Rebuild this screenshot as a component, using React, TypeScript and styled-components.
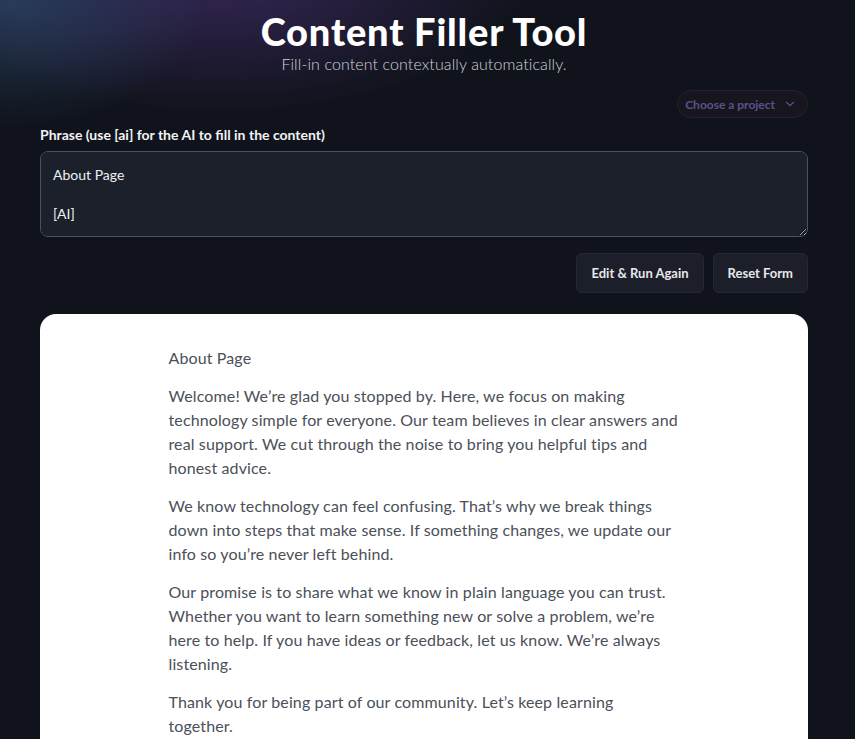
import React from 'react'
import styled, { createGlobalStyle } from 'styled-components'

const GlobalStyle = createGlobalStyle`
  html, body { margin: 0; padding: 0; }
  body {
    background-color: #10131b;
    font-family: Lato, "Liberation Sans", sans-serif;
    min-height: 100vh;
    overflow: hidden;
  }
`

const Root = styled.div`
  min-height: 739px;
  padding: 0 47px 0 40px;
  background:
    radial-gradient(ellipse 260px 170px at 10px 0px, rgba(48, 82, 120, 0.6), transparent 75%),
    radial-gradient(ellipse 440px 200px at 220px -30px, rgba(80, 52, 128, 0.6), transparent 72%),
    #10131b;
`

const Main = styled.main`
  max-width: 768px;
  margin: 0 auto;
  display: flex;
  flex-direction: column;
`

const Header = styled.header`
  display: flex;
  flex-direction: column;
  align-items: center;
  padding-top: 8px;
`

const Title = styled.h1`
  margin: 0;
  font-family: Lato, sans-serif;
  font-weight: 900;
  font-size: 38px;
  line-height: 46px;
  letter-spacing: 0.8px;
  color: #ffffff;
`

const Subtitle = styled.p`
  margin: 0;
  font-weight: 300;
  font-size: 16px;
  line-height: 20px;
  letter-spacing: 0.1px;
  color: #cfd3d9;
`

const ProjectRow = styled.div`
  display: flex;
  justify-content: flex-end;
  margin-top: 16px;
`

const ProjectPicker = styled.button`
  display: flex;
  align-items: center;
  gap: 8px;
  height: 28px;
  padding: 0 10px 0 7px;
  border-radius: 14px;
  border: 1px solid #23202f;
  background: #17161f;
  color: #5f4f8c;
  font-family: Lato, sans-serif;
  font-weight: 700;
  font-size: 12px;
`

const Label = styled.label`
  display: block;
  margin-top: 8px;
  font-weight: 700;
  font-size: 14px;
  line-height: 18px;
  color: #f1f3f6;
`

const Phrase = styled.textarea`
  box-sizing: border-box;
  margin-top: 7px;
  width: 100%;
  height: 86px;
  padding: 13px 12px;
  border-radius: 8px;
  border: 1px solid #4b5160;
  background: #1b202b;
  color: #eef0f3;
  font-family: Lato, sans-serif;
  font-size: 14px;
  line-height: 19.5px;
  resize: vertical;
  outline: none;
`

const Actions = styled.div`
  display: flex;
  justify-content: flex-end;
  gap: 9px;
  margin-top: 16px;
`

const ActionButton = styled.button`
  height: 40px;
  padding: 0 14px;
  border-radius: 6px;
  border: 1px solid #242833;
  background: #1c1f29;
  color: #e6e8ec;
  font-family: Lato, sans-serif;
  font-weight: 700;
  font-size: 13px;
`

const Result = styled.section`
  margin-top: 21px;
  background: #ffffff;
  border-radius: 16px;
  padding: 32px 0 40px;
  min-height: 500px;
`

const Prose = styled.article`
  max-width: 511px;
  margin: 0 auto;
  color: #4b5059;
  font-weight: 400;
  font-size: 16px;
  line-height: 24px;
  letter-spacing: 0.12px;

  p { margin: 0 0 14px; }
`

const Chevron = () => (
  <svg width="14" height="14" viewBox="0 0 24 24" fill="none" stroke="currentColor" strokeWidth="2" strokeLinecap="round" strokeLinejoin="round">
    <path d="m6 9 6 6 6-6" />
  </svg>
)

const paragraphs = [
  'About Page',
  'Welcome! We\u2019re glad you stopped by. Here, we focus on making technology simple for everyone. Our team believes in clear answers and real support. We cut through the noise to bring you helpful tips and honest advice.',
  'We know technology can feel confusing. That\u2019s why we break things down into steps that make sense. If something changes, we update our info so you\u2019re never left behind.',
  'Our promise is to share what we know in plain language you can trust. Whether you want to learn something new or solve a problem, we\u2019re here to help. If you have ideas or feedback, let us know. We\u2019re always listening.',
  'Thank you for being part of our community. Let\u2019s keep learning together.',
]

export default function App() {
  return (
    <>
      <GlobalStyle />
      <Root>
        <Main>
          <Header>
            <Title>Content Filler Tool</Title>
            <Subtitle>Fill-in content contextually automatically.</Subtitle>
          </Header>
          <ProjectRow>
            <ProjectPicker>
              Choose a project
              <Chevron />
            </ProjectPicker>
          </ProjectRow>
          <Label htmlFor="phrase">Phrase (use [ai] for the AI to fill in the content)</Label>
          <Phrase id="phrase" defaultValue={'About Page\n\n[AI]'} />
          <Actions>
            <ActionButton>Edit &amp; Run Again</ActionButton>
            <ActionButton>Reset Form</ActionButton>
          </Actions>
          <Result>
            <Prose>
              {paragraphs.map((p, i) => <p key={i}>{p}</p>)}
            </Prose>
          </Result>
        </Main>
      </Root>
    </>
  )
}
